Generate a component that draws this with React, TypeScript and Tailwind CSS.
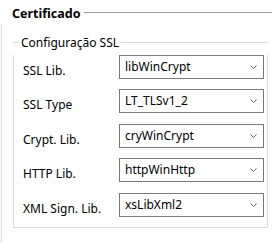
const rows = [
    { label: 'SSL Lib.', value: 'libWinCrypt', gap: 'mt-[6px]' },
    { label: 'SSL Type', value: 'LT_TLSv1_2', gap: 'mt-[10px]' },
    { label: 'Crypt. Lib.', value: 'cryWinCrypt', gap: 'mt-[11px]' },
    { label: 'HTTP Lib.', value: 'httpWinHttp', gap: 'mt-[10px]' },
    { label: 'XML Sign. Lib.', value: 'xsLibXml2', gap: 'mt-[11px]' },
];

function Combo({ value }: { value: string }) {
    return (
        <div className="w-[145px] h-[24px] border border-[#7a7a7a] bg-white flex items-center pl-[5px] pr-[6px]">
            <span className="flex-1 text-[12px] leading-[16px] text-black">{value}</span>
            <svg width="7" height="4" viewBox="0 0 7 4" className="shrink-0">
                <polyline points="0.5,0.5 3.5,3.5 6.5,0.5" fill="none" stroke="#6b6b6b" strokeWidth="1" />
            </svg>
        </div>
    );
}

export default function App() {
    return (
        <div className="w-[272px] h-[243px] bg-white flex flex-col font-['Noto_Sans',sans-serif] text-black overflow-hidden">
            {/* outer group header */}
            <div className="flex items-start h-[24px]">
                <span className="pl-[12px] pr-[4px] pt-[6px] text-[12.5px] leading-[16px] font-bold">Certificado</span>
                <div className="flex-1 h-px mt-[12px] bg-[#a0a0a0]" />
            </div>

            <div className="flex-1 ml-[1px] border-l border-[#dcdcdc] pl-[11px] pr-[4px] pt-[12px]">
                {/* inner group */}
                <div className="flex items-center h-[13px]">
                    <div className="w-[6px] h-px bg-[#dcdcdc]" />
                    <span className="px-[2px] text-[12px] leading-[13px]">Configuração SSL</span>
                    <div className="flex-1 h-px bg-[#dcdcdc]" />
                </div>
                <div className="border-l border-r border-b border-[#dcdcdc] pl-[9px] pr-[3px] pb-[10px]">
                    {rows.map((r) => (
                        <div key={r.label} className={`flex items-start ${r.gap}`}>
                            <span className="w-[96px] pt-[8px] text-[12px] leading-[16px]">{r.label}</span>
                            <Combo value={r.value} />
                        </div>
                    ))}
                </div>
            </div>
        </div>
    );
}
